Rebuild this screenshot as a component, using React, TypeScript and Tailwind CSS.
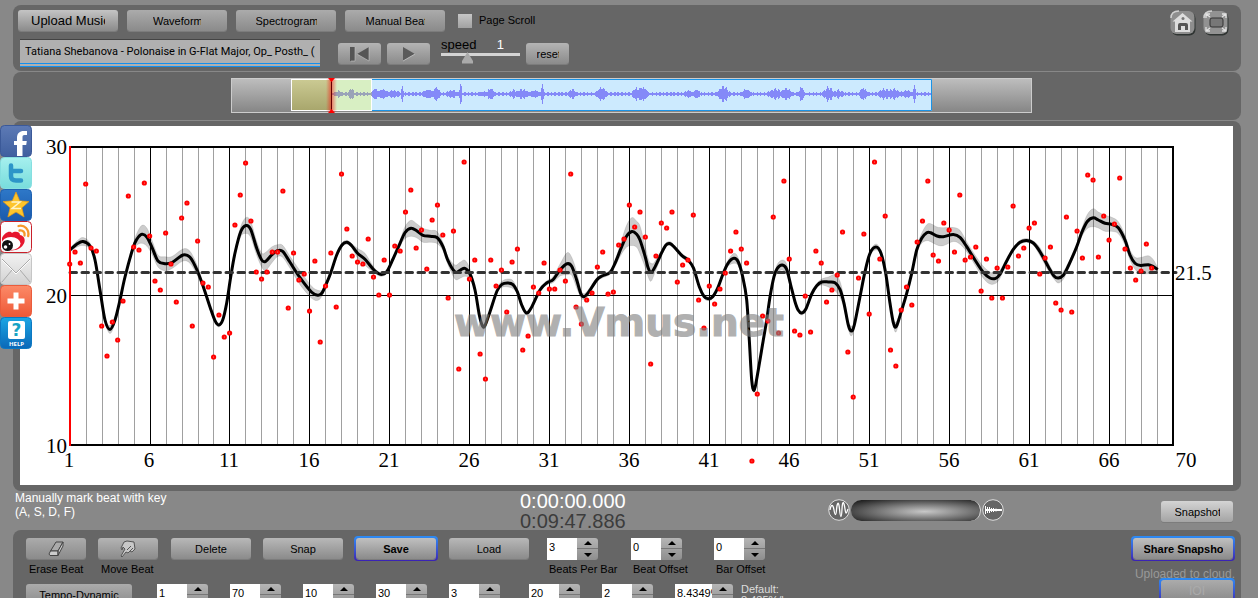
import { useState } from "react";
import type { ReactNode } from "react";
import clsx from "clsx";

// one value per beat, three beats to a bar
const BEATS = [
  264, 252, 263, 184, 248, 251, 326, 356, 322, 340, 301, 196, 247, 250, 183, 236, 281, 290, 233, 264,
  302, 218, 203, 326, 241, 283, 287, 357, 315, 337, 333, 225, 195, 163, 221, 272, 279, 272, 252, 252,
  191, 308, 253, 280, 274, 311, 261, 342, 286, 253, 307, 174, 229, 256, 262, 264, 239, 277, 295, 260,
  295, 246, 251, 212, 190, 248, 230, 269, 220, 205, 235, 298, 231, 369, 162, 279, 260, 354, 379, 260,
  286, 270, 312, 262, 249, 350, 336, 287, 293, 263, 289, 289, 270, 281, 174, 307, 324, 300, 293, 267,
  252, 294, 292, 245, 239, 205, 227, 212, 237, 364, 256, 223, 228, 212, 282, 265, 260, 215, 300, 328,
  286, 304, 289, 273, 251, 232, 249, 263, 461, 394, 316, 321, 217, 333, 181, 259, 331, 335, 296, 332,
  251, 263, 302, 290, 275, 232, 352, 397, 278, 234, 314, 162, 259, 216, 350, 366, 310, 287, 305, 242,
  221, 181, 255, 261, 223, 230, 252, 195, 260, 257, 247, 291, 259, 298, 268, 298, 267, 206, 256, 248,
  228, 223, 274, 258, 247, 303, 310, 217, 312, 231, 258, 175, 180, 257, 216, 240, 224, 178, 249, 268,
  280, 271, 244, 268,
];

// x, y, half height of the deviation band
const CURVE: [number, number, number][] = [
  [70, 250, 1], [77, 244, 2], [83, 241.5, 3], [90, 246, 2], [95, 260, 1], [100, 290, 1], [105, 320, 1],
  [110, 329.5, 3], [115, 320, 2], [120, 300, 1], [125, 277, 1], [133, 248, 2], [137, 239, 5], [142, 234.3, 8],
  [147, 237.3, 8], [152, 247.3, 6], [158, 261, 5], [165, 263.7, 6], [172, 262.5, 5], [183, 255, 5], [190, 257.3, 5],
  [197, 270, 4], [203.3, 286.7, 2], [210, 307, 1], [215, 320.7, 1], [218.7, 325, 1], [222.7, 320, 1], [226.7, 303, 1],
  [230.7, 277, 1], [235, 253, 2], [240.7, 231.7, 4], [246, 225.5, 7], [250.7, 229.3, 7], [256.7, 248.3, 6], [261.7, 260, 6],
  [265.7, 261.3, 8], [271.7, 255, 7], [277.3, 250.7, 5], [282.7, 251.3, 5], [290, 262.3, 5], [300, 277.7, 6],
  [311.7, 292.3, 5], [318, 295.3, 4], [322, 293, 2], [325.7, 285.3, 1], [330.7, 273, 1], [336.7, 255, 1], [342, 245, 1],
  [347, 242.3, 1], [351.7, 245.7, 1], [358, 253.7, 4], [365, 259.3, 5], [373, 269, 2], [378, 273.3, 1], [382, 274.3, 1],
  [387, 271.3, 1], [393, 259, 1], [400, 243.3, 2], [405, 232.7, 5], [411, 228.3, 7], [417, 231, 6], [423, 235.3, 6],
  [430, 236.3, 5], [437, 237.5, 5], [443, 246.7, 3], [448, 260.7, 3], [455, 272, 6], [460, 270.3, 7], [465, 268.3, 7],
  [470, 274, 4], [475, 290, 1], [479.3, 315, 1], [482.5, 326, 1], [485, 325.5, 1], [490, 311.7, 1], [497, 291, 1],
  [502, 284.3, 2], [508, 283, 3], [513, 284.7, 3], [517.3, 291.7, 1], [521.7, 305, 1], [526.3, 313, 1], [531, 308.3, 1],
  [540, 290, 1], [547, 282.7, 1], [553, 279.7, 2], [560, 270, 5], [567, 263.8, 10], [571.7, 266.3, 8], [576.7, 280, 7],
  [580.7, 293.3, 3], [584, 296.7, 2], [588.3, 292.7, 2], [596.7, 280, 1], [602, 276, 1], [610, 272.5, 1], [615, 263.3, 2],
  [621.7, 246.7, 6], [626.7, 236, 10], [632, 231.5, 13], [636.7, 234.3, 12], [640, 240, 13], [645, 256, 10],
  [648.3, 268.3, 8], [651, 272.3, 8], [654.3, 268.3, 5], [661.7, 252.7, 2], [666, 245, 1], [669.7, 243.5, 1], [674, 246.7, 1],
  [682, 255.7, 1], [688, 260, 1], [693.3, 267.7, 1], [699.3, 286.7, 1], [704, 296.3, 1], [708, 298.7, 1], [712.7, 296.7, 1],
  [718, 287.3, 1], [723, 274, 1], [728, 263.3, 2], [734, 258.3, 4], [738.3, 262, 3], [742.7, 276.7, 2], [746.7, 300, 1],
  [749.3, 340, 1], [751.7, 380, 1], [754, 390.5, 1], [756.7, 379, 1], [763.3, 340, 1], [766.7, 320, 1], [770, 297, 1],
  [774, 276.7, 1], [777.3, 268.3, 3], [782.3, 265, 4], [786.7, 269.3, 4], [790.7, 285, 1], [795, 301.7, 1],
  [798.3, 310.3, 1], [801.7, 313, 1], [805.7, 309.3, 1], [811.7, 294, 1], [816.7, 285.7, 1], [821.7, 282, 2],
  [828.3, 282, 4], [835, 282.7, 7], [840, 289.3, 7], [844, 303.3, 4], [848.3, 325, 3], [851.3, 331, 4], [854.3, 325, 2],
  [860, 296.7, 2], [865, 271.7, 1], [870, 253.3, 1], [876, 247, 2], [881, 253.3, 1], [885.7, 273.3, 1], [890, 303.3, 1],
  [893.3, 322.5, 2], [896.3, 326.5, 4], [901.7, 310, 1], [906.7, 293.3, 1], [911.7, 273.3, 1], [916.7, 250, 2],
  [921.7, 238.3, 4], [926.7, 232.7, 7], [930.7, 232.7, 8], [937, 236, 8], [943.3, 236.7, 8], [953.3, 234.5, 6],
  [960, 237.3, 6], [966.7, 246.7, 4], [975, 260, 4], [983.3, 272.3, 5], [990, 278, 5], [995.7, 278.3, 4],
  [1000, 274.3, 3], [1006.7, 261, 1], [1013.3, 249.3, 1], [1020, 242.3, 1], [1026.7, 240.5, 1], [1033.3, 243, 1],
  [1040, 251.7, 3], [1048.3, 266.7, 3], [1054, 276, 2], [1058.3, 278, 4], [1063.3, 275.3, 3], [1068.3, 266, 2],
  [1076.7, 246.7, 2], [1081.7, 232.7, 3], [1087.3, 221.5, 6], [1093.3, 217.7, 8], [1098.3, 220, 7], [1105, 223.3, 7],
  [1111.7, 224.3, 6], [1118.3, 227.7, 5], [1125, 240, 4], [1130, 255, 4], [1135, 263.3, 5], [1140.7, 265.5, 7],
  [1148.3, 264.7, 8], [1153.3, 266.7, 6], [1157.7, 269.5, 1],
];

const BAR_LABELS = [1, 6, 11, 16, 21, 26, 31, 36, 41, 46, 51, 56, 61, 66];
const barX = (k: number) => (k < 9 ? 70 + 16 * k : 69 + 16 * k) + 0.5;

function spline(pts: number[][]) {
  let d = "";
  for (let i = 0; i < pts.length - 1; i++) {
    const a = pts[Math.max(i - 1, 0)];
    const b = pts[i];
    const c = pts[i + 1];
    const e = pts[Math.min(i + 2, pts.length - 1)];
    d += `C${b[0] + (c[0] - a[0]) / 6} ${b[1] + (c[1] - a[1]) / 6} ${c[0] - (e[0] - b[0]) / 6} ${c[1] - (e[1] - b[1]) / 6} ${c[0]} ${c[1]}`;
  }
  return d;
}

const upper = CURVE.map(([x, y, b]) => [x, y - b - 1]);
const lower = CURVE.map(([x, y, b]) => [x, y + b + 1]).reverse();
const curvePath = `M70 250${spline(CURVE)}`;
const bandPath = `M${upper[0]}${spline(upper)}L${lower[0]}${spline(lower)}Z`;

// position, height, spread
const PEAKS = [
  [338, 4, 2], [351, 6, 2], [365, 2, 5], [375, 6, 3], [382, 5, 5], [393, 4, 6], [402, 8, 1], [428, 5, 5], [436, 7, 3],
  [451, 4, 5], [460, 11, 1], [484, 3, 7], [490, 6, 3], [513, 4, 4], [522, 5, 5], [534, 4, 5], [542, 12, 1], [572, 5, 3],
  [601, 7, 4], [636, 7, 3], [642, 8, 4], [688, 4, 4], [696, 5, 3], [723, 8, 4], [746, 5, 4], [775, 5, 6], [786, 6, 4],
  [801, 8, 2], [828, 7, 4], [838, 4, 5], [863, 7, 3], [884, 5, 5], [893, 5, 6], [906, 4, 5], [914, 11, 1], [922, 2, 4],
];

function waveBars(from: number, to: number) {
  let d = "";
  for (let x = from; x < to; x++) {
    const amp = PEAKS.reduce((s, [p, h, w]) => Math.max(s, h * Math.exp(-((x - p) ** 2) / (2 * w * w))), 1.7);
    const jitter = 0.65 + 0.5 * Math.abs(Math.sin(x * 2.3) * Math.cos(x * 0.9));
    const h = Math.max(1, amp * jitter);
    d += `M${x + 0.5} ${94 - h}V${94 + h}`;
  }
  return d;
}

function PushButton({ children, className, textClass }: { children: ReactNode; className?: string; textClass?: string }) {
  return (
    <button
      className={clsx(
        "flex h-[21px] shrink-0 items-center justify-center overflow-hidden rounded-[3px] bg-linear-to-b from-[#ababab] to-[#8b8b8b] text-[11px] shadow-[0_1px_0_#7c7c7c]",
        className,
      )}
    >
      <span className={clsx("overflow-hidden whitespace-nowrap pt-px", textClass)}>{children}</span>
    </button>
  );
}

// blue ring drawn round the default buttons
function Ring({ children, className }: { children: ReactNode; className?: string }) {
  return (
    <div className={clsx("-my-0.5 rounded-[4px] bg-linear-to-b from-[#2b8cf5] to-[#3a20b4] p-[2px]", className)}>{children}</div>
  );
}

function Stepper({ label, value, wide, hideLabel }: { label: string; value: string; wide?: boolean; hideLabel?: boolean }) {
  const [text, setText] = useState(value);
  return (
    <div className="flex flex-col">
      <div className="flex h-[22px]">
        <input
          aria-label={label}
          value={text}
          onChange={(e) => setText(e.target.value)}
          className={clsx("h-[22px] bg-white pb-1 pl-0.5 text-[11px] outline-none", wide ? "w-[37px]" : "w-[30px]")}
        />
        <div className="flex w-[21px] flex-col overflow-hidden rounded-r-[3px] bg-linear-to-b from-[#b5b5b5] to-[#8e8e8e]">
          <button aria-label={`${label} up`} className="flex h-[11px] items-center justify-center border-b border-[#777]">
            <svg width="8" height="4" viewBox="0 0 8 4"><path d="M0 4 4 0l4 4z" /></svg>
          </button>
          <button aria-label={`${label} down`} className="flex h-[11px] items-center justify-center">
            <svg width="8" height="4" viewBox="0 0 8 4"><path d="M0 0h8L4 4z" /></svg>
          </button>
        </div>
      </div>
      {!hideLabel && <span className="pl-0.5 pt-[3px] whitespace-nowrap text-[11px] leading-3">{label}</span>}
    </div>
  );
}

function TempoChart() {
  return (
    <svg viewBox="20 126 1213 359" className="block w-full bg-white" role="img" aria-label="Tempo curve">
      <g shapeRendering="crispEdges">
        {Array.from({ length: 68 }, (_, i) => i + 1).map((k) => (
          <line key={k} x1={barX(k)} x2={barX(k)} y1="146" y2="445" stroke={k % 5 === 0 ? "#000" : "#a0a0a0"} />
        ))}
        <line x1="70" x2="1173" y1="295.5" y2="295.5" stroke="#000" />
      </g>
      <path d={bandPath} fill="#000" fillOpacity="0.2" stroke="#000" strokeOpacity="0.15" strokeWidth="0.7" />
      <path d={curvePath} fill="none" stroke="#000" strokeWidth="3" />
      <line x1="70" x2="1176" y1="272.5" y2="272.5" stroke="#333" strokeWidth="3" strokeLinecap="round" strokeDasharray="6.5 5.5" />
      <path d="M69 147H1173V445H69" fill="none" stroke="#000" strokeWidth="2" shapeRendering="crispEdges" />
      <line x1="70" x2="70" y1="146" y2="446" stroke="red" strokeWidth="2" shapeRendering="crispEdges" />
      <g fill="#fff" stroke="red" strokeWidth="2.2">
        {BEATS.map((y, i) => (
          <circle key={i} cx={69.7 + i * 5.33} cy={y} r="1.5" />
        ))}
      </g>
      <text
        x="454"
        y="336"
        fontFamily="DejaVu Sans, sans-serif"
        fontWeight="700"
        fontSize="39"
        fill="#808080"
        stroke="#808080"
        strokeWidth="1"
        opacity="0.62"
      >
        www.Vmus.net
      </text>
      <g fontFamily="Liberation Serif, serif" fontSize="21">
        <g textAnchor="end">
          <text x="67" y="154">30</text>
          <text x="67" y="303">20</text>
          <text x="67" y="453">10</text>
        </g>
        <text x="1175" y="280">21.5</text>
        <g textAnchor="middle">
          {BAR_LABELS.map((n) => (
            <text key={n} x={69 + (n - 1) * 16} y="467">{n}</text>
          ))}
          <text x="1186" y="467">70</text>
        </g>
      </g>
    </svg>
  );
}

function Overview() {
  return (
    <svg viewBox="231 76 801 38" className="block w-[801px]" role="img" aria-label="Recording overview">
      <defs>
        <linearGradient id="ovGray" x1="0" y1="0" x2="0" y2="1">
          <stop offset="0" stopColor="#bebebe" />
          <stop offset="1" stopColor="#858585" />
        </linearGradient>
        <linearGradient id="ovOlive" x1="0" y1="0" x2="0" y2="1">
          <stop offset="0" stopColor="#cbca93" />
          <stop offset="1" stopColor="#a8a66c" />
        </linearGradient>
        <linearGradient id="ovGlow">
          <stop offset="0" stopColor="#f00" stopOpacity="0" />
          <stop offset="0.5" stopColor="#f00" stopOpacity="0.5" />
          <stop offset="1" stopColor="#f00" stopOpacity="0" />
        </linearGradient>
      </defs>
      <rect x="231.5" y="78.5" width="800" height="34" fill="url(#ovGray)" stroke="#ccc" />
      <rect x="291" y="79" width="641" height="32" fill="#cceafe" />
      <path d="M371 79.5H931.5V110.5H371" fill="none" stroke="#1b93e6" />
      <rect x="291.5" y="79.5" width="40" height="31" fill="url(#ovOlive)" />
      <rect x="332" y="79.5" width="40" height="31" fill="#d8efc3" />
      <rect x="291.5" y="79.5" width="80" height="31" fill="none" stroke="#fff" />
      <path d={waveBars(332, 372)} stroke="#9aa3b8" shapeRendering="crispEdges" />
      <path d={waveBars(372, 931)} stroke="#8489f8" shapeRendering="crispEdges" />
      <rect x="326" y="79" width="11" height="33" fill="url(#ovGlow)" />
      <path d="M331.5 79V112" stroke="#600" />
      <path d="M328 78h7l-3.500 4zM328 113h7l-3.500-4z" fill="red" />
    </svg>
  );
}

function Tile({ name, fill, edge, children }: { name: string; fill: [string, string]; edge: string; children: ReactNode }) {
  return (
    <a href="#" aria-label={name} className="block">
      <svg width="32" height="32" viewBox="0 0 32 32" className="block">
        <defs>
          <linearGradient id={`tile-${name}`} x1="0" y1="0" x2="0" y2="1">
            <stop offset="0" stopColor={fill[0]} />
            <stop offset="1" stopColor={fill[1]} />
          </linearGradient>
        </defs>
        <rect x="0.5" y="0.500" width="31" height="31" rx="4" fill={`url(#tile-${name})`} stroke={edge} />
        {children}
      </svg>
    </a>
  );
}

function ShareBar() {
  return (
    <nav className="absolute left-0 top-[125px] w-8">
      <Tile name="Facebook" fill={["#5d7ab5", "#3f5f9f"]} edge="#3b5998">
        <path d="M17 31V20h-3v-4h3v-3c0-5 3-7 6.500-7H27v4h-2.500c-1.500 0-2 .8-2 2.300V16h4.300l-.6 4h-3.700v11z" fill="#fff" />
      </Tile>
      <Tile name="Twitter" fill={["#a6f0ee", "#78dcdc"]} edge="#86dfe0">
        <path d="M11 8.500V19c0 3 1.500 4.500 5 4.500h5M11 14h10" fill="none" stroke="#2d95c8" strokeWidth="4.500" strokeLinecap="round" />
      </Tile>
      <Tile name="Qzone" fill={["#2e78c8", "#1a5aac"]} edge="#1e60b0">
        <path d="m16 3 3.700 8.800 9.300.8-7.100 6.200 2.200 9.200-8.100-4.900L7.900 28l2.200-9.200L3 12.600l9.300-.8z" fill="#fdc52c" stroke="#e89a10" strokeWidth="0.7" />
        <path d="M11.500 13h8.500l-8 6.500h9" fill="none" stroke="#fff5c8" strokeWidth="1.500" />
      </Tile>
      <Tile name="Weibo" fill={["#fff", "#f6f6f6"]} edge="#c9202a">
        <path d="M2 17c2-5 8-8 10-5 2-2 8-2 8 2 5 1 6 6 3 10-4 7-18 7-21 1z" fill="#e6162d" />
        <ellipse cx="11" cy="22.500" rx="9.500" ry="6.500" fill="#fff" />
        <circle cx="7.500" cy="24.500" r="5.500" fill="#111" />
        <circle cx="5.500" cy="26" r="1.800" fill="#fff" />
        <circle cx="9.500" cy="23" r="0.900" fill="#fff" />
        <path d="M18.500 5c6-1.500 11 3.500 9.700 10M19.500 9.500c3.500-.7 5.700 2 5 5" fill="none" stroke="#f6982a" strokeWidth="2.300" strokeLinecap="round" />
      </Tile>
      <Tile name="Mail" fill={["#f2f2f2", "#d2d2d2"]} edge="#c6c6c6">
        <path d="m2 6 14 14L30 6M2 29l10-12M30 29 20 17" fill="none" stroke="#aaa" />
        <path d="m2 7 14 14L30 7" fill="none" stroke="#fff" />
      </Tile>
      <Tile name="More" fill={["#fc8a68", "#ee5836"]} edge="#ea5c3c">
        <path d="M16 7.500v17M7.500 16h17" stroke="#fff" strokeWidth="5" />
      </Tile>
      <Tile name="Help" fill={["#1ba6e4", "#0a68b8"]} edge="#0c78c2">
        <rect x="8" y="4" width="17" height="18" rx="2" fill="#fff" />
        <text x="16.500" y="19" textAnchor="middle" fontFamily="DejaVu Sans, sans-serif" fontWeight="700" fontSize="17" fill="#16a3c4">?</text>
        <text x="16.500" y="29" textAnchor="middle" fontFamily="Open Sans, sans-serif" fontWeight="700" fontSize="6" fill="#fff">HELP</text>
      </Tile>
    </nav>
  );
}

function CornerIcons() {
  return (
    <div className="flex items-start gap-[7px] pr-3">
      <button aria-label="Home">
        <svg width="26" height="26" viewBox="0 0 26 26">
          <rect x="1.500" y="2.500" width="24" height="23" rx="6" fill="#2f3432" />
          <rect x="0.500" y="1" width="24" height="23" rx="6" fill="#8e8e8e" />
          <path d="M1 8c0-5 3-7 8-7" fill="none" stroke="#d0d0d0" strokeWidth="1.500" />
          <path d="m12.500 3 10 8.500H20V22H5V11.500H2.500z" fill="#ddd" />
          <path d="M8 20v-5q0-2 2-2h6q2 0 2 2v5h-3v-4h-4v4z" fill="#555" />
          <circle cx="13" cy="8.500" r="1.500" fill="#777" />
        </svg>
      </button>
      <button aria-label="Full screen">
        <svg width="26" height="26" viewBox="0 0 26 26">
          <rect x="1.500" y="2.500" width="24" height="23" rx="6" fill="#2f3432" />
          <rect x="0.500" y="1" width="24" height="23" rx="6" fill="#929292" />
          <path d="M1 8c0-5 3-7 8-7" fill="none" stroke="#d0d0d0" strokeWidth="1.500" />
          <rect x="7" y="8" width="13" height="9" rx="2" fill="#777" stroke="#333" />
          <path d="M3 8V4h4M3 4l4 3M19 4h4v4M23 4l-4 3M3 17v4h4M3 21l4-3M19 21h4v-4M23 21l-4-3" fill="none" stroke="#e2e2e2" strokeWidth="1.300" />
        </svg>
      </button>
    </div>
  );
}

function Transport() {
  const [speed, setSpeed] = useState(1);
  return (
    <>
      <PushButton className="ml-[18px] w-[43px] from-[#b4b4b4]">
        <svg width="24" height="16" viewBox="0 0 24 16" aria-label="Back to start">
          <path d="M2 1h5v14H2zM9 8l12-7v14z" fill="#555" />
          <path d="M7 1v14H3M21 1v14L9 8" fill="none" stroke="#c8c8c8" strokeWidth="0.600" />
        </svg>
      </PushButton>
      <PushButton className="ml-1.5 w-[43px] from-[#b4b4b4]">
        <svg width="16" height="16" viewBox="0 0 16 16" aria-label="Play">
          <path d="M2 1v14l12-7z" fill="#5a5a5a" />
          <path d="m2 15 12-7" stroke="#ccc" strokeWidth="0.800" />
        </svg>
      </PushButton>
      <label className="relative -mt-1 ml-[11px] flex h-[27px] w-[79px] flex-col">
        <span className="flex justify-between pr-4 text-[13px] leading-[14px]">
          speed<span className="text-white">{speed}</span>
        </span>
        <input
          type="range"
          min={0}
          max={3}
          value={speed}
          onChange={(e) => setSpeed(Number(e.target.value))}
          className="absolute inset-0 w-full cursor-pointer opacity-0"
        />
        <svg width="79" height="13" viewBox="0 0 79 13">
          <rect y="1" width="79" height="3" fill="#d4d4d4" />
          <path d="m26.500 0 5.500 9v2.500H21V9z" fill="#aaa" />
        </svg>
      </label>
      <PushButton className="ml-1.5 w-[43px] from-[#b4b4b4]" textClass="w-[22px] text-left">reset</PushButton>
    </>
  );
}

export default function App() {
  const [scroll, setScroll] = useState(false);
  const [title, setTitle] = useState("Tatiana Shebanova - Polonaise in G-Flat Major, Op_ Posth_ (");

  return (
    <div className="relative h-screen overflow-hidden bg-[#888] pl-[13px] pr-[17px] pt-[5px] font-['Liberation_Sans',Arial,sans-serif] text-black">
      {/* Toolbar */}
      <header className="flex h-[66px] justify-between rounded-[8px] bg-[#666] pt-[5px]">
        <div>
          <div className="flex items-center gap-[9px] pl-[5px]">
            <PushButton className="w-[100px] from-[#c4c4c4] text-[13px]" textClass="w-[74px] text-left">Upload Music</PushButton>
            <PushButton className="w-[100px]" textClass="w-[48px] text-left">Waveform</PushButton>
            <PushButton className="w-[100px]" textClass="w-[61px] text-left">Spectrogram</PushButton>
            <PushButton className="w-[100px]" textClass="w-[59px] text-left">Manual Beat</PushButton>
            <label className="flex items-center gap-[7px] pl-1 text-[11px]">
              <input
                type="checkbox"
                checked={scroll}
                onChange={(e) => setScroll(e.target.checked)}
                className="size-[14px] appearance-none bg-linear-to-b from-[#c6c6c6] to-[#a2a2a2] checked:bg-gray-500"
              />
              Page Scroll
            </label>
          </div>
          <div className="flex items-center pl-[7px] pt-[9px]">
            <input
              aria-label="Recording"
              value={title}
              onChange={(e) => setTitle(e.target.value)}
              className="h-[27px] w-[300px] border-b-4 border-double border-[#1490ee] bg-[#b0b0b0] pl-[5px] font-[Roboto,sans-serif] text-[11px] shadow-[0_-1px_0_#444] outline-none"
            />
            <Transport />
          </div>
        </div>
        <CornerIcons />
      </header>

      {/* Overview */}
      <section className="mt-px flex h-12 items-start justify-center rounded-[8px] bg-[#666] pl-2 pt-1">
        <Overview />
      </section>

      {/* Chart */}
      <section className="mt-px rounded-[8px] bg-[#666] pb-[6px] pl-[7px] pr-2 pt-[5px]">
        <TempoChart />
      </section>

      {/* Status line */}
      <section className="flex h-[39px] items-start pl-0.5">
        <p className="w-[505px] text-[12px] leading-[14px] text-white">
          Manually mark beat with key<br />(A, S, D, F)
        </p>
        <div className="w-[308px] text-[20px] leading-5">
          <div className="text-white">0:00:00.000</div>
          <div className="text-[#3c3c3c]">0:09:47.886</div>
        </div>
        <div className="flex items-center gap-px pt-2">
          <svg width="22" height="22" viewBox="0 0 22 22">
            <circle cx="11" cy="11" r="10.300" fill="#666" stroke="#ddd" />
            <path d="M2 11c1-6 3-6 4 0s2 6 2.500 0S10.500 0 11.500 10s2 10 2.500 0 2-7 3 0 1.500 4 3 0" fill="none" stroke="#fff" strokeWidth="1.300" />
          </svg>
          <div className="h-[21px] w-[130px] rounded-full border-r border-[#ddd] bg-[radial-gradient(ellipse_at_57%_55%,#c8c8c8,#888_35%,#222_90%)]" />
          <svg width="22" height="22" viewBox="0 0 22 22">
            <circle cx="11" cy="11" r="10.300" fill="#666" stroke="#ddd" />
            <path d="M3.500 7v8M5.500 8v6M7.500 8v6M9.500 9v4M11.500 9v4M14 9.500v3M17 10v2" stroke="#fff" />
            <path d="M3 11h17" stroke="#fff" strokeWidth="2" />
          </svg>
        </div>
        <div className="ml-auto pr-2 pt-[10px]">
          <PushButton className="w-[72px] from-[#d4d4d4] to-[#a4a4a4]" textClass="w-[45px] text-left">Snapshot</PushButton>
        </div>
      </section>

      {/* Beat controls */}
      <section className="relative h-[120px] rounded-[8px] bg-[#666] pl-[13px] pt-2">
        <div className="flex items-start">
          <div className="w-[72px] text-[11px]">
            <PushButton className="w-[60px] from-[#999]">
              <svg width="18" height="16" viewBox="0 0 18 16" aria-label="Erase">
                <path d="M9 1h7l-5 9H3.500z" fill="#aaa" stroke="#444" />
                <path d="M3.500 10H11v4.500H3L2 13zM11 10l5-9v4l-5 9.500z" fill="#ccc" stroke="#444" />
              </svg>
            </PushButton>
            <div className="pl-[3px] pt-1 leading-3">Erase Beat</div>
          </div>
          <div className="w-[73px] text-[11px]">
            <PushButton className="w-[60px] from-[#b4b4b4]">
              <svg width="18" height="18" viewBox="0 0 18 18" aria-label="Move">
                <path d="m2 8 3-6 3-1 7 1 1 7-3 3-2-1-2 2-2-1-4 5-1-1 4-7-2-2-1 3z" fill="#c8c8c8" stroke="#555" />
                <path d="m8 10 4-4M10 12l4-4" stroke="#555" />
              </svg>
            </PushButton>
            <div className="pl-[3px] pt-1 leading-3">Move Beat</div>
          </div>
          <PushButton className="mr-3 w-20 from-[#b8b8b8]">Delete</PushButton>
          <PushButton className="mr-[11px] w-20 from-[#b8b8b8]">Snap</PushButton>
          <Ring className="mr-[11px]">
            <PushButton className="w-20 from-[#c0c0c0] font-bold">Save</PushButton>
          </Ring>
          <PushButton className="mr-[18px] w-20 from-[#b8b8b8]">Load</PushButton>
          <div className="w-[84px]"><Stepper label="Beats Per Bar" value="3" /></div>
          <div className="w-[83px]"><Stepper label="Beat Offset" value="0" /></div>
          <Stepper label="Bar Offset" value="0" />
        </div>
        <div className="flex items-start pt-[9px]">
          <PushButton className="mr-[25px] w-[106px]">Tempo-Dynamic</PushButton>
          {["1", "70", "10", "30"].map((v, i) => (
            <div key={i} className="w-[73px]"><Stepper label={`Range ${i + 1}`} value={v} hideLabel /></div>
          ))}
          <div className="w-20"><Stepper label="Smoothing" value="3" hideLabel /></div>
          <div className="w-[73px]"><Stepper label="Window" value="20" hideLabel /></div>
          <div className="w-[73px]"><Stepper label="Line width" value="2" hideLabel /></div>
          <Stepper label="Scale" value="8.4349%" wide hideLabel />
          <p className="ml-2 text-[11px] leading-[11px] text-[#ddd]">Default:<br />8.435%/bar</p>
        </div>

        <div className="absolute right-[6px] top-2 flex flex-col items-end">
          <Ring>
            <PushButton className="w-[100px] from-[#c0c0c0] font-bold" textClass="w-[79px] text-left">Share Snapshot</PushButton>
          </Ring>
          <span className="pt-[9px] text-[12px] leading-3 text-[#999]">Uploaded to cloud.</span>
          <Ring>
            <PushButton className="w-[72px] from-[#868686] to-[#6c6c6c] text-[12px] text-[#aaa]">IOI</PushButton>
          </Ring>
        </div>
      </section>

      <ShareBar />
    </div>
  );
}
